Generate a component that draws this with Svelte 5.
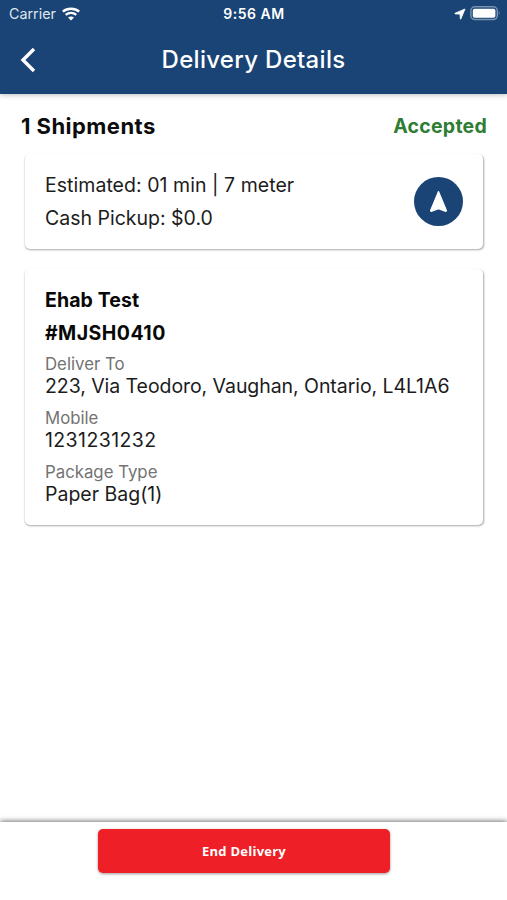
<script lang="ts">
	const shipment = {
		name: 'Ehab Test',
		code: '#MJSH0410',
		fields: [
			{ label: 'Deliver To', value: '223, Via Teodoro, Vaughan, Ontario, L4L1A6', cls: 'address' },
			{ label: 'Mobile', value: '1231231232', cls: 'mobile' },
			{ label: 'Package Type', value: 'Paper Bag(1)', cls: 'package' }
		]
	};

	let status = $state('Accepted');
</script>

<div class="screen">
	<header>
		<div class="status-bar">
			<div class="carrier">
				<span>Carrier</span>
				<svg width="18" height="14" viewBox="0 0 18 14" fill="none">
					<path d="M.8 4.6C5.3.7 12.7.7 17.2 4.6" stroke="#fff" stroke-width="2.5" />
					<path d="M3.7 7.9C6.7 5.2 11.3 5.2 14.3 7.9" stroke="#fff" stroke-width="2.3" />
					<path d="M9 13.5 6 10.5C7.7 9 10.3 9 12 10.5Z" fill="#fff" />
				</svg>
			</div>
			<span class="clock">9:56 AM</span>
			<div class="indicators">
				<svg width="12" height="12" viewBox="0 0 12 12">
					<path d="M11 1 6.9 10.9Q6.5 11.6 6.3 10.7L6 6.1 1.2 5.9Q.4 5.6 1.1 5.2Z" fill="#fff" stroke="#fff" stroke-width=".8" stroke-linejoin="round" />
				</svg>
				<svg width="31" height="15" viewBox="0 0 31 15">
					<rect x=".9" y=".8" width="26.4" height="12.8" rx="4" fill="none" stroke="#fff" stroke-opacity=".42" stroke-width="1.5" />
					<rect x="2.8" y="2.7" width="22.6" height="9" rx="1.8" fill="#fff" />
					<path d="M28.8 5.1Q30.5 7.2 28.8 9.3Z" fill="#fff" fill-opacity=".5" />
				</svg>
			</div>
		</div>
		<div class="nav">
			<button class="back" aria-label="Back">
				<svg width="16" height="26" viewBox="0 0 16 26">
					<path d="M14 2 3 13 14 24" fill="none" stroke="#fff" stroke-width="3.4" />
				</svg>
			</button>
			<h1>Delivery Details</h1>
		</div>
	</header>

	<main>
		<div class="summary">
			<span class="count">1 Shipments</span>
			<span class="status">{status}</span>
		</div>

		<section class="card route">
			<div>
				<p class="estimate">Estimated: 01 min | 7 meter</p>
				<p class="cash">Cash Pickup: $0.0</p>
			</div>
			<button class="navigate" aria-label="Navigate">
				<svg width="19" height="23" viewBox="0 0 19 23">
					<path d="M9.5 1.6 17.5 20.8 16.8 21.4 9.5 18.6 2.2 21.4 1.5 20.8Z" fill="#fff" stroke="#fff" stroke-width="1.2" stroke-linejoin="round" />
				</svg>
			</button>
		</section>

		<section class="card details">
			<h2 class="name">{shipment.name}</h2>
			<h2 class="code">{shipment.code}</h2>
			{#each shipment.fields as field}
				<div class="field {field.cls}">
					<span class="label">{field.label}</span>
					<span class="value">{field.value}</span>
				</div>
			{/each}
		</section>
	</main>

	<footer>
		<button class="end">End Delivery</button>
	</footer>
</div>

<style>
	:global(body) {
		margin: 0;
		background: #fff;
	}

	.screen {
		display: flex;
		flex-direction: column;
		width: 507px;
		height: 900px;
		overflow: hidden;
		font-family: Inter, 'Liberation Sans', sans-serif;
		color: #1c1c1c;
		background: #fff;
	}

	h1,
	h2,
	p {
		margin: 0;
	}

	button {
		display: flex;
		align-items: center;
		justify-content: center;
		padding: 0;
		border: 0;
		background: none;
	}

	svg {
		display: block;
	}

	header {
		height: 94px;
		color: #fff;
		background: #194475;
		box-shadow: 0 1px 5px rgba(0, 0, 0, 0.25);
	}

	.status-bar {
		display: grid;
		grid-template-columns: 1fr auto 1fr;
		align-items: center;
		height: 27px;
		padding: 0 6px 0 9px;
		font-size: 14.3px;
	}

	.carrier {
		display: flex;
		align-items: center;
		gap: 6px;
		color: #dfe6ee;
	}

	.clock {
		margin-right: 2px;
		font-size: 14px;
		font-weight: 600;
		letter-spacing: 0.5px;
	}

	.indicators {
		display: flex;
		align-items: center;
		justify-content: flex-end;
		gap: 4px;
	}

	.nav {
		display: grid;
		grid-template-columns: 56px 1fr 56px;
		align-items: center;
		height: 65px;
	}

	.back {
		width: 56px;
		height: 56px;
	}

	h1 {
		font-size: 24px;
		font-weight: 500;
		line-height: 32px;
		letter-spacing: 0.3px;
		text-align: center;
	}

	main {
		flex: 1;
		padding: 0 24px 0 25px;
	}

	.summary {
		display: flex;
		justify-content: space-between;
		align-items: center;
		height: 60px;
		margin: 0 -4px;
		padding-top: 4px;
		box-sizing: border-box;
	}

	.count {
		font-size: 22px;
		font-weight: 650;
		letter-spacing: 0.45px;
		color: #0c0c0c;
	}

	.status {
		font-size: 19.5px;
		font-weight: 650;
		letter-spacing: 0.25px;
		color: #2e7d32;
	}

	.card {
		box-sizing: border-box;
		padding: 0 20px;
		border-radius: 5px;
		background: #fff;
		box-shadow: 0.5px 1px 2px rgba(0, 0, 0, 0.34);
	}

	.route {
		display: flex;
		justify-content: space-between;
		align-items: center;
		height: 95px;
		margin-bottom: 20px;
		font-size: 19.5px;
		line-height: 33px;
	}

	.estimate {
		letter-spacing: 0.04px;
	}

	.navigate {
		width: 49px;
		height: 49px;
		border-radius: 50%;
		background: #194475;
	}

	.details {
		height: 256px;
		padding-top: 15px;
	}

	h2 {
		font-size: 19.5px;
		font-weight: 650;
		line-height: 33px;
		color: #080808;
	}

	.name {
		letter-spacing: 0.1px;
	}

	.code {
		letter-spacing: 0.45px;
	}

	.field {
		display: flex;
		flex-direction: column;
		height: 53.8px;
	}

	.label {
		padding-top: 4px;
		font-size: 16.8px;
		line-height: 21px;
		color: #737373;
	}

	.value {
		font-size: 19.5px;
		line-height: 23px;
		white-space: nowrap;
	}

	.address .value {
		letter-spacing: -0.06px;
	}

	.mobile .value {
		letter-spacing: 0.4px;
	}

	footer {
		display: flex;
		justify-content: center;
		height: 78px;
		padding: 7px 19px 0 0;
		box-sizing: border-box;
		box-shadow: 0 -1px 5px rgba(0, 0, 0, 0.55);
	}

	.end {
		width: 292px;
		height: 44px;
		border-radius: 5px;
		font-family: 'Open Sans', 'Noto Sans', sans-serif;
		font-size: 13px;
		font-weight: 700;
		letter-spacing: 0.25px;
		color: #fff;
		background: #ee1f26;
		box-shadow: 0 1px 3px rgba(0, 0, 0, 0.4);
	}
</style>
